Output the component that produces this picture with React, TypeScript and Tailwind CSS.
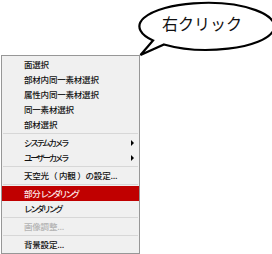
import React from "react";

type Item = { label: string; arrow?: boolean; active?: boolean; disabled?: boolean } | "sep";

const items: Item[] = [
  { label: "面選択" },
  { label: "部材内同一素材選択" },
  { label: "属性内同一素材選択" },
  { label: "同一素材選択" },
  { label: "部材選択" },
  "sep",
  { label: "システムカメラ", arrow: true },
  { label: "ユーザーカメラ", arrow: true },
  "sep",
  { label: "天空光（ 内観 ）の設定..." },
  "sep",
  { label: "部分レンダリング", active: true },
  { label: "レンダリング" },
  "sep",
  { label: "画像調整...", disabled: true },
  "sep",
  { label: "背景設定..." },
];

function Label({ text }: { text: string }) {
  const parts = text.split(/([\u30A0-\u30FF]+)/).filter((p) => p.length > 0);
  return (
    <span className="whitespace-pre">
      {parts.map((p, i) =>
        /^[\u30A0-\u30FF]+$/.test(p) ? (
          <span key={i} className="tracking-[-2.3px]">
            {p}
          </span>
        ) : (
          <span key={i} className="tracking-[-0.2px]">{p}</span>
        )
      )}
    </span>
  );
}

export default function App() {
  return (
    <div className="relative w-[272px] h-[254px] bg-white overflow-hidden font-['Noto_Sans_CJK_JP',sans-serif]">
      <svg className="absolute left-0 top-0" width="272" height="60" viewBox="0 0 272 60">
        <path
          d="M153 40.5 L140.5 55 L164 44.5 A67.5 23.5 0 1 0 153 40.5 Z"
          fill="white"
          stroke="black"
          strokeWidth="2.2"
          strokeLinejoin="miter"
        />
        <text
          x="202"
          y="30"
          textAnchor="middle"
          fontSize="16"
          fill="#111"
          fontFamily="'Noto Sans CJK JP', sans-serif"
        >
          右クリック
        </text>
      </svg>
      <div className="pt-[55px] pl-[1px]">
        <div className="w-[139px] h-[199px] bg-[#f0f0f0] border border-[#979797] py-[1px] text-[8.5px] font-medium leading-none text-[#111]">
          {items.map((it, i) =>
            it === "sep" ? (
              <div key={i} className="h-[3px] px-[1px] pt-[1px]">
                <div className="h-px bg-[#d7d7d7]" />
              </div>
            ) : (
              <div
                key={i}
                className={
                  "relative h-[15px] flex items-center pl-[22px] " +
                  (it.active ? "bg-[#c00000] text-[#fde8e8] " : "") +
                  (it.disabled ? "text-[#b4b4b4] " : "")
                }
              >
                <Label text={it.label} />
                {it.arrow && (
                  <span className="absolute right-[5px] top-[5px] w-0 h-0 border-y-[3px] border-y-transparent border-l-[3px] border-l-black" />
                )}
              </div>
            )
          )}
        </div>
      </div>
    </div>
  );
}
